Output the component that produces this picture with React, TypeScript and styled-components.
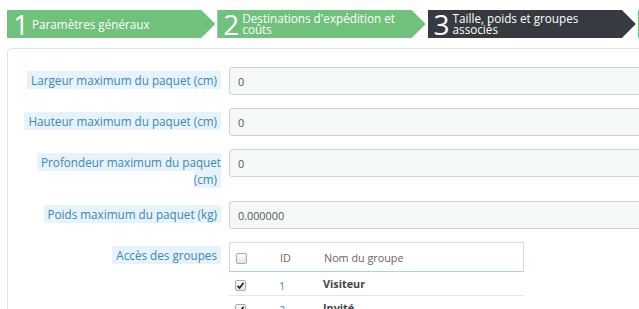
import styled, { createGlobalStyle } from 'styled-components';

const GlobalStyle = createGlobalStyle`
    html, body {
        margin: 0;
        padding: 0;
        background: #fff;
        overflow: hidden;
    }
    body {
        font-family: "Open Sans", "Liberation Sans", sans-serif;
        color: #555;
    }
`

const Page = styled.div`
    width: 639px;
    height: 309px;
    overflow: hidden;
    padding: 10px 0 0 7px;
    box-sizing: border-box;
`

const Steps = styled.div`
    display: flex;
    width: 900px;
`

const Step = styled.div<{ $current?: boolean }>`
    flex: 0 0 auto;
    width: 210.3px;
    height: 28px;
    box-sizing: border-box;
    display: flex;
    align-items: center;
    gap: 3px;
    padding: 0 18px 0 6px;
    background: ${p => p.$current ? '#363a41' : '#6fc17b'};
    color: #fff;
    clip-path: polygon(0 0, calc(100% - 16px) 0, calc(100% - 2px) 50%, calc(100% - 16px) 100%, 0 100%);
`

const StepNumber = styled.span`
    font-size: 28px;
    font-weight: 400;
    line-height: 28px;
    flex: 0 0 auto;
`

const StepTitle = styled.span`
    font-size: 11.7px;
    line-height: 11px;
`

const Panel = styled.div`
    margin-top: 10px;
    width: 760px;
    border: 1px solid #e3e3e3;
    border-radius: 5px;
    box-sizing: border-box;
    padding: 18px 0 0 0;
    height: 400px;
`

const FormRow = styled.div`
    display: grid;
    grid-template-columns: 213px 1fr;
    column-gap: 8px;
    margin-bottom: 13px;
    align-items: start;
`

const LabelCell = styled.div`
    text-align: right;
    padding: 5px 0 0 10px;
    font-size: 11.7px;
    line-height: 17px;
`

const LabelText = styled.span`
    background: #e6f3fa;
    color: #3a88b3;
    padding: 1px 4px;
`

const TextInput = styled.div`
    height: 28px;
    box-sizing: border-box;
    background: #f5f8f9;
    border: 1px solid #c7d6db;
    border-radius: 3px;
    padding: 0 8px;
    display: flex;
    align-items: center;
    font-size: 10.8px;
    color: #555;
`

const Table = styled.div`
    width: 295px;
    font-size: 10.8px;
`

const TableRow = styled.div<{ $head?: boolean }>`
    display: grid;
    grid-template-columns: 43px 44px 1fr;
    align-items: center;
    height: ${p => p.$head ? '30px' : '24px'};
    box-sizing: border-box;
    border-bottom: 1px solid ${p => p.$head ? '#a6d3ec' : '#e6e6e6'};
    ${p => p.$head ? 'border-top: 1px solid #d9d9d9; border-left: 1px solid #d9d9d9; border-right: 1px solid #d9d9d9;' : ''}
`

const Cell = styled.div<{ $kind?: 'id' | 'name' | 'head' }>`
    padding-left: ${p => p.$kind ? '7px' : '6px'};
    color: ${p => p.$kind === 'id' ? '#3f8cb6' : p.$kind === 'name' ? '#444' : '#666'};
    font-weight: ${p => p.$kind === 'name' ? 700 : 400};
    padding-top: ${p => p.$kind === 'id' ? '3px' : '0'};
`

const Box = styled.span`
    display: inline-flex;
    align-items: center;
    justify-content: center;
    width: 11px;
    height: 11px;
    box-sizing: border-box;
    border: 1px solid #a9a9a9;
    border-radius: 2px;
    background: linear-gradient(#fdfdfd, #e4e4e4);
    vertical-align: middle;
`

function Checkbox({ checked }: { checked?: boolean }) {
    return <Box>
        {checked && <svg width="9" height="9" viewBox="0 0 9 9">
            <path d="M1.5 4.8 L3.6 7 L7.6 1.8" fill="none" stroke="#222" strokeWidth="1.7" />
        </svg>}
    </Box>
}

const fields = [
    { label: 'Largeur maximum du paquet (cm)', value: '0' },
    { label: 'Hauteur maximum du paquet (cm)', value: '0' },
    { label: 'Profondeur maximum du paquet (cm)', value: '0' },
    { label: 'Poids maximum du paquet (kg)', value: '0.000000' },
]

const groups = [
    { id: 1, name: 'Visiteur' },
    { id: 2, name: 'Invité' },
    { id: 3, name: 'Client' },
]

export default function App() {
    return <>
        <GlobalStyle />
        <Page>
            <Steps>
                <Step>
                    <StepNumber>1</StepNumber>
                    <StepTitle>Paramètres généraux</StepTitle>
                </Step>
                <Step>
                    <StepNumber>2</StepNumber>
                    <StepTitle>Destinations d'expédition et coûts</StepTitle>
                </Step>
                <Step $current>
                    <StepNumber>3</StepNumber>
                    <StepTitle>Taille, poids et groupes associés</StepTitle>
                </Step>
                {/* next step, only its left edge is in view */}
                <Step />
            </Steps>
            <Panel>
                {fields.map(f => <FormRow key={f.label}>
                    <LabelCell><LabelText>{f.label}</LabelText></LabelCell>
                    <TextInput>{f.value}</TextInput>
                </FormRow>)}
                <FormRow>
                    <LabelCell><LabelText>Accès des groupes</LabelText></LabelCell>
                    <Table>
                        <TableRow $head>
                            <Cell><Checkbox /></Cell>
                            <Cell $kind="head">ID</Cell>
                            <Cell $kind="head">Nom du groupe</Cell>
                        </TableRow>
                        {groups.map(g => <TableRow key={g.id}>
                            <Cell><Checkbox checked /></Cell>
                            <Cell $kind="id">{g.id}</Cell>
                            <Cell $kind="name">{g.name}</Cell>
                        </TableRow>)}
                    </Table>
                </FormRow>
            </Panel>
        </Page>
    </>
}
